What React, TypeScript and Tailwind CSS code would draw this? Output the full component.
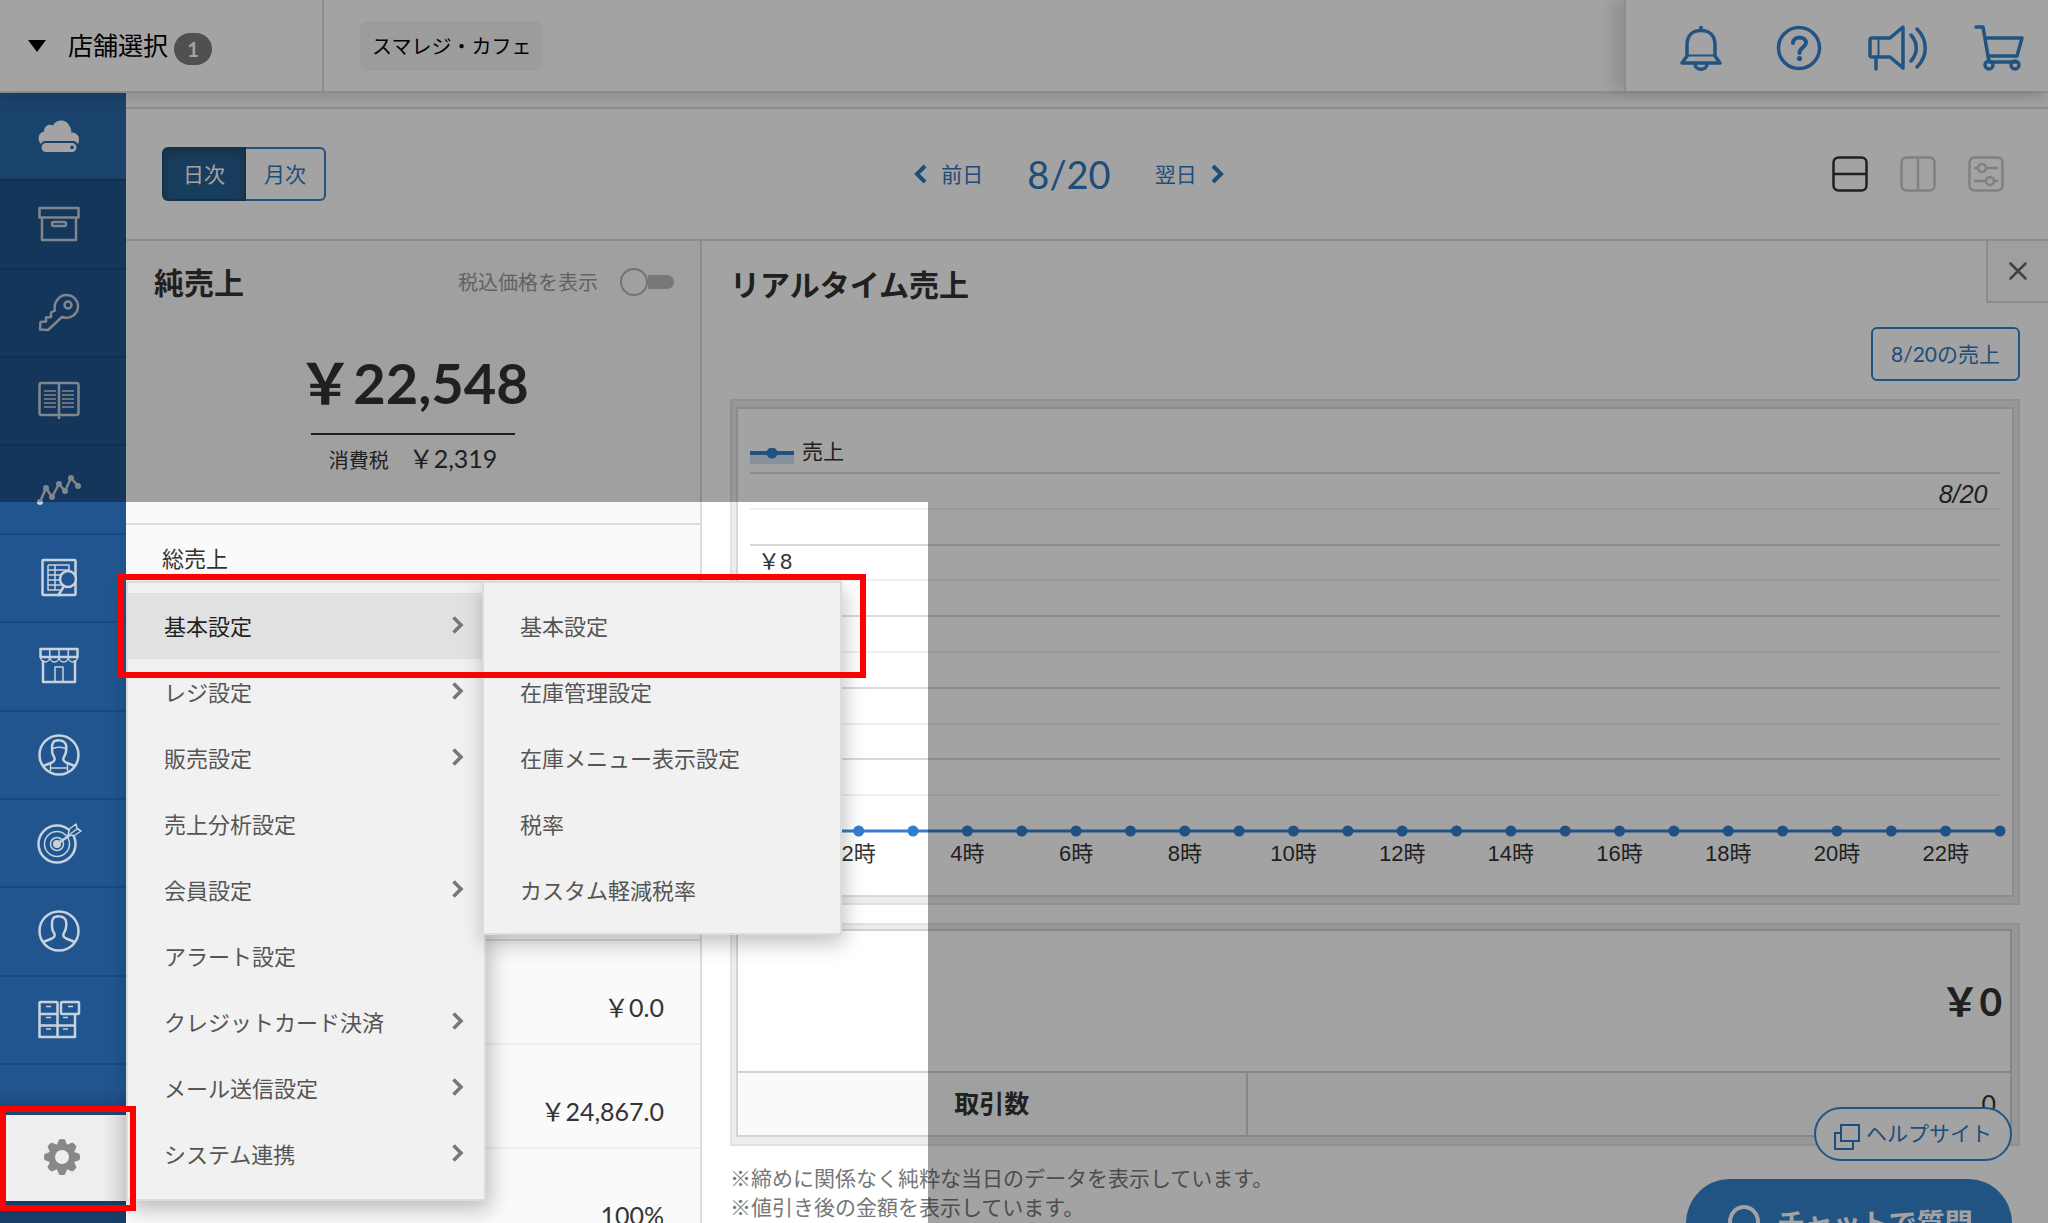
import type { ReactNode } from "react";

const navIcons: { label: string; drawing: ReactNode }[] = [
  {
    label: "ホーム",
    drawing: (
      <>
        <path
          d="M2.5 29C-1 24 .5 17.500 6 16.500C6 11 11 8.500 15 10.500C18 4 28 3.500 31.500 11C33 13.500 33.500 15 33.300 17.500C39.500 17 43 23 40 29L38.500 27.500C38 26.500 36.500 26 35 26H8C6 26 4.500 26.500 3.500 28Z"
          fill="currentColor"
          stroke="none"
        />
        <path
          d="M8 28H34a4 4 0 0 1 0 9H8a4 4 0 0 1 0-9ZM34 30.500a1.800 1.800 0 1 0 .01 0Z"
          fill="currentColor"
          fillRule="evenodd"
          stroke="none"
        />
      </>
    ),
  },
  {
    label: "商品",
    drawing: (
      <>
        <path d="M1.500 4H40.500V13.500H1.500ZM4 13.500V36H38V13.500" />
        <rect x="14" y="18" width="14" height="4" rx="1.500" />
      </>
    ),
  },
  {
    label: "権限",
    drawing: (
      <>
        <path d="M17 18.500C15 11 21 3 28.500 3C35.500 3 40 8.500 40 14.500C40 22 32 28 24 25L10 38L2 37.500L2.500 30L8 29.500V25.500L13 25V20.500Z" />
        <circle cx="30" cy="13" r="3.500" />
      </>
    ),
  },
  {
    label: "台帳",
    drawing: (
      <>
        <rect x="1.500" y="3" width="39" height="32" rx="2" />
        <path d="M21 3V39" />
        <path
          d="M6 11H18M6 15H18M6 19H18M6 23H18M6 27H18M24 11H36M24 15H36M24 19H36M24 23H36M24 27H36"
          strokeWidth="1.500"
        />
      </>
    ),
  },
  {
    label: "売上分析",
    drawing: (
      <>
        <path d="M2 33L8 19L14 28L21 15L27 22L33 9L40 17" />
        <g fill="currentColor" stroke="none">
          <circle cx="2" cy="33" r="3" />
          <circle cx="8" cy="19" r="3" />
          <circle cx="14" cy="28" r="3" />
          <circle cx="21" cy="15" r="3" />
          <circle cx="27" cy="22" r="3" />
          <circle cx="33" cy="9" r="3" />
          <circle cx="40" cy="17" r="3" />
        </g>
      </>
    ),
  },
  {
    label: "履歴",
    drawing: (
      <>
        <rect x="4.500" y="3" width="33" height="35" rx="1" />
        <path d="M10 8H31V15M10 8V33H22M17 8V33M10 13H31M10 18H24M10 23H23M10 28H24" strokeWidth="1.500" />
        <circle cx="30" cy="22" r="8" fill="#20558f" />
        <path d="M26 29L20 39" strokeWidth="2.500" />
      </>
    ),
  },
  {
    label: "店舗",
    drawing: (
      <>
        <path d="M2.500 4H39.500V12H2.500ZM5 15V37H37V15" />
        <path d="M2.500 12a4.600 5 0 0 0 9.250 0a4.600 5 0 0 0 9.250 0a4.600 5 0 0 0 9.250 0a4.600 5 0 0 0 9.250 0M11.750 4V12M21 4V12M30.250 4V12M17 37V22H25V37" strokeWidth="1.500" />
      </>
    ),
  },
  {
    label: "スタッフ",
    drawing: (
      <>
        <circle cx="21" cy="21" r="19.500" />
        <path d="M5 32L14 28.500C17 27 17.500 25 15.500 22C13.500 19 13 8 17 7C19 6 24 6 26 8C29.500 10 28.500 19 26.500 22C24.500 25 25 27 28 28.500L37 32" />
        <path d="M15 14.500Q21 12 27.500 14.500M12.500 29V37M29.500 29V37M12.500 34H29.500" strokeWidth="1.500" />
      </>
    ),
  },
  {
    label: "販促",
    drawing: (
      <>
        <circle cx="19" cy="22" r="18.500" />
        <circle cx="19" cy="22" r="12.500" strokeWidth="1.500" />
        <circle cx="19" cy="22" r="6.500" strokeWidth="1.500" />
        <circle cx="19" cy="22" r="2.800" fill="currentColor" />
        <path d="M19 22L41 7" />
        <path d="M30 13L31.500 7L38 2L39 6.500L43 9L36.500 13.500Z" fill="#20558f" strokeWidth="1.500" />
        <path d="M28 15L39 7" strokeWidth="1.500" />
      </>
    ),
  },
  {
    label: "会員",
    drawing: (
      <>
        <circle cx="21" cy="21" r="19.500" />
        <path d="M5 32L14 28.500C17 27 17.500 25 15.500 22C13.500 19 13 8 17 7C19 6 24 6 26 8C29.500 10 28.500 19 26.500 22C24.500 25 25 27 28 28.500L37 32" />
      </>
    ),
  },
  {
    label: "在庫",
    drawing: (
      <>
        <rect x="1.500" y="3" width="18" height="12" rx="1" />
        <rect x="23" y="3" width="18" height="12" rx="1" />
        <path d="M1.500 15V38H37V15M1.500 26.500H37M19.500 15V38" />
        <path d="M8 7.500H13M30 7.500H35M8 18.500H13M25 18.500H30M8 30H13M25 30H30" strokeWidth="1.500" />
      </>
    ),
  },
];

const menuItems = [
  { label: "基本設定", hasChildren: true },
  { label: "レジ設定", hasChildren: true },
  { label: "販売設定", hasChildren: true },
  { label: "売上分析設定", hasChildren: false },
  { label: "会員設定", hasChildren: true },
  { label: "アラート設定", hasChildren: false },
  { label: "クレジットカード決済", hasChildren: true },
  { label: "メール送信設定", hasChildren: true },
  { label: "システム連携", hasChildren: true },
];

const subMenuItems = ["基本設定", "在庫管理設定", "在庫メニュー表示設定", "税率", "カスタム軽減税率"];

const summaryValues = ["￥0.0", "￥24,867.0", "100%"];

const Chevron = ({ flip = false }: { flip?: boolean }) => (
  <svg viewBox="0 0 14 20" className="h-5 w-3.5" fill="none" stroke="currentColor" strokeWidth="4">
    <path d={flip ? "M12 2L4 10L12 18" : "M2 2L10 10L2 18"} />
  </svg>
);

const Header = () => (
  <header className="relative z-10 flex h-[93px] shrink-0 border-b-2 border-[#dcdcdc] bg-white shadow-[0_6px_12px_rgba(0,0,0,0.12)]">
    <button className="flex w-[324px] items-center border-r-2 border-[#dcdcdc] pl-7 text-[25px] text-black">
      <svg viewBox="0 0 18 12" className="mr-[22px] h-3 w-[18px]">
        <path d="M0 0H18L9 12Z" fill="currentColor" />
      </svg>
      店舗選択
      <span className="mt-1.5 ml-1.5 flex h-8 w-[38px] items-center justify-center rounded-full bg-[#7d7d7d] text-xl font-bold text-white">
        1
      </span>
    </button>
    <div className="flex flex-1 items-center pl-9">
      <span className="flex h-[50px] items-center rounded-lg bg-[#f5f5f5] px-3 text-xl text-black">スマレジ・カフェ</span>
    </div>
    <div className="flex items-center gap-[46px] border-l-2 border-[#dcdcdc] pt-1 pr-6 pl-[54px] text-[#3584cd] shadow-[-12px_0_14px_rgba(0,0,0,0.12)]">
      <button aria-label="お知らせ">
        <svg viewBox="0 0 42 48" className="h-12 w-[42px]" fill="none" stroke="currentColor" strokeWidth="3.500" strokeLinejoin="round">
          <path d="M21 2V7M7 32V21C7 11 13 6.500 21 6.500S35 11 35 21V32L40 39H2Z" />
          <path d="M7 31.500H35" strokeWidth="2" />
          <path d="M15 40C15 47 27 47 27 40" />
        </svg>
      </button>
      <button aria-label="ヘルプ" className="ml-2">
        <svg viewBox="0 0 46 46" className="size-[46px]" fill="none" stroke="currentColor" strokeWidth="3.500">
          <circle cx="23" cy="23" r="20.500" />
          <path d="M17 18C17 10.500 30 11 30 17.500C30 22 23.500 22.500 23.500 28" strokeWidth="4" strokeLinecap="round" />
          <circle cx="23.500" cy="33.500" r="2.600" fill="currentColor" stroke="none" />
        </svg>
      </button>
      <button aria-label="キャンペーン">
        <svg viewBox="0 0 60 46" className="h-[46px] w-[60px]" fill="none" stroke="currentColor" strokeWidth="3.500" strokeLinecap="round" strokeLinejoin="round">
          <path d="M22 13H4Q2 13 2 15V30Q2 32 4 32H22L35 43V2ZM8 32V44" />
          <path d="M10.500 13V32" strokeWidth="2" />
          <path d="M43 10C50 18 50 28 43 36M49 4C60 15 60 31 49 42" />
        </svg>
      </button>
      <button aria-label="ストア">
        <svg viewBox="0 0 50 46" className="h-[46px] w-[50px]" fill="none" stroke="currentColor" strokeWidth="3.500" strokeLinecap="round" strokeLinejoin="round">
          <path d="M2 2H9L15 37M12 13H48L43 31H14M15 37H42" />
          <circle cx="15" cy="40" r="4" />
          <circle cx="41" cy="40" r="4" />
        </svg>
      </button>
    </div>
  </header>
);

const Sidebar = () => (
  <aside className="flex w-[126px] shrink-0 flex-col bg-[#20558f]">
    <nav className="flex flex-1 flex-col">
      {navIcons.map((item, index) => (
        <a
          key={item.label}
          href="#"
          aria-label={item.label}
          className={`flex flex-1 items-center justify-center border-b-2 border-[#1b487a] pr-2 ${
            index === 0 ? "bg-[#2a69aa] text-white" : "text-[#c8d2dd]"
          }`}
        >
          <svg viewBox="0 0 42 42" className="size-[42px] overflow-visible" fill="none" stroke="currentColor" strokeWidth="2.500" strokeLinejoin="round">
            {item.drawing}
          </svg>
        </a>
      ))}
    </nav>
    <div className="bg-linear-to-b from-[#20558f] from-15% to-[#173d68] to-40% pt-[50px] pb-[22px]">
      <button aria-label="設定" className="flex h-[86px] w-full items-center justify-center bg-linear-to-r from-[#eeeeee] from-80% to-[#dcdcdc] pr-0.5 pb-0.5 text-[#888888]">
        <svg viewBox="-18 -18 36 36" className="size-9">
          <g fill="currentColor">
            {[0, 45, 90, 135, 180, 225, 270, 315].map((angle) => (
              <path key={angle} d="M-5.500 -11L-3 -17.500Q0 -18.500 3 -17.500L5.500 -11Z" transform={`rotate(${angle})`} />
            ))}
          </g>
          <circle r="10" fill="none" stroke="currentColor" strokeWidth="6" />
        </svg>
      </button>
    </div>
  </aside>
);

const Toolbar = () => (
  <div className="flex h-[132px] shrink-0 items-center justify-between border-b-2 border-[#dcdcdc] pr-11 pl-9 text-[21px] text-[#3079bd]">
    <div className="flex h-[54px]">
      <button className="w-[84px] rounded-l-md border-2 border-[#204d74] bg-[#286090] text-white shadow-[inset_0_4px_8px_rgba(0,0,0,0.2)]">
        日次
      </button>
      <button className="w-20 rounded-r-md border-2 border-l-0 border-[#3584cd]">月次</button>
    </div>
    <div className="mr-5 flex items-center">
      <button className="flex items-center gap-3.5">
        <Chevron flip />
        前日
      </button>
      <span className="mx-11 text-[38px] leading-none">8/20</span>
      <button className="flex items-center gap-3.5">
        翌日
        <Chevron />
      </button>
    </div>
    <div className="flex gap-8 text-[#c9c9c9]">
      <button aria-label="横分割" className="text-[#333333]">
        <svg viewBox="0 0 36 36" className="size-9" fill="none" stroke="currentColor" strokeWidth="2.500">
          <rect x="1.500" y="1.500" width="33" height="33" rx="5" />
          <path d="M1 18H35" />
        </svg>
      </button>
      <button aria-label="縦分割">
        <svg viewBox="0 0 36 36" className="size-9" fill="none" stroke="currentColor" strokeWidth="2.500">
          <rect x="1.500" y="1.500" width="33" height="33" rx="5" />
          <path d="M18 1V35" />
        </svg>
      </button>
      <button aria-label="表示設定">
        <svg viewBox="0 0 36 36" className="size-9" fill="none" stroke="currentColor" strokeWidth="2.500">
          <rect x="1.500" y="1.500" width="33" height="33" rx="5" />
          <path d="M6 12H10M18 12H30M6 25H18M26 25H30" />
          <circle cx="14" cy="12" r="4" />
          <circle cx="22" cy="25" r="4" />
        </svg>
      </button>
    </div>
  </div>
);

const Summary = () => (
  <section className="w-[576px] shrink-0 border-r-2 border-[#dcdcdc] bg-[#fafafa]">
    <div className="h-[284px] border-b-2 border-[#dcdcdc] pt-5">
      <div className="flex items-center justify-between pr-[26px] pl-7">
        <h2 className="text-[30px] leading-[42px] font-bold">純売上</h2>
        <label className="flex items-center text-xl text-[#999999]">
          税込価格を表示
          <input type="checkbox" role="switch" className="peer sr-only" />
          <span className="ml-[22px] flex h-7 w-[54px] items-center">
            <span className="size-7 shrink-0 rounded-full border-2 border-[#b5b5b5] bg-[#fafafa]" />
            <span className="h-3.5 flex-1 rounded-r-full bg-[#bcbcbc]" />
          </span>
        </label>
      </div>
      <div className="flex flex-col items-center">
        <p className="mt-[38px] pb-2 text-[56px] leading-[84px] font-bold">￥22,548</p>
        <div className="h-0.5 w-[204px] bg-[#333333]" />
        <p className="flex items-baseline gap-5 text-xl leading-[46px]">
          消費税<span className="text-[25px]">￥2,319</span>
        </p>
      </div>
    </div>
    <div className="h-[416px] border-b-2 border-[#dcdcdc] px-9 pt-[18px] text-[22px] leading-8">総売上</div>
    {summaryValues.map((value) => (
      <div key={value} className="flex h-[104px] items-end justify-end border-b-2 border-[#ececec] pr-9 pb-[18px] text-[25px] leading-9">
        {value}
      </div>
    ))}
  </section>
);

const SalesChart = () => {
  const gridLines = [...Array(11)].map((_, i) => i);
  const hours = [...Array(24)].map((_, i) => i);

  return (
    <div className="border-2 border-[#e2e2e2] bg-[#ededed] px-1 py-1.5">
      <div className="border-2 border-[#d9d9d9] bg-white px-3 font-['Liberation_Sans','Noto_Sans_CJK_JP',sans-serif]">
        <div className="flex h-[63px] items-end gap-2 pb-1 text-[21px] leading-8">
          <svg viewBox="0 0 44 18" className="mb-0.5 h-[18px] w-11">
            <rect y="6" width="44" height="10" fill="#d3e2f3" />
            <path d="M0 5H44" stroke="#347dcd" strokeWidth="4" />
            <circle cx="22" cy="5" r="5.500" fill="#347dcd" />
          </svg>
          売上
        </div>
        <svg className="block h-[423px] w-full overflow-visible text-[22px]" fill="#333333">
          {gridLines.map((i) => (
            <line
              key={i}
              x1="0"
              x2="100%"
              y1={1 + Math.round(i * 35.8)}
              y2={1 + Math.round(i * 35.8)}
              stroke={i % 2 === 0 ? "#d9d9d9" : "#efefef"}
              strokeWidth="2"
            />
          ))}
          <line x1="0" x2="100%" y1="359" y2="359" stroke="#347dcd" strokeWidth="3" />
          {hours.map((hour) => (
            <circle key={hour} cx={`${(hour / 23) * 100}%`} cy="359" r="5.500" fill="#347dcd" />
          ))}
          {hours
            .filter((hour) => hour > 0 && hour % 2 === 0)
            .map((hour) => (
              <text key={hour} x={`${(hour / 23) * 100}%`} y="389" textAnchor="middle">
                {hour}時
              </text>
            ))}
          <text x="8" y="97">￥8</text>
          <text x="99%" y="31" textAnchor="end" fontStyle="italic" fontSize="25">
            8/20
          </text>
        </svg>
      </div>
    </div>
  );
};

const Realtime = () => (
  <section className="relative min-w-0 flex-1 bg-white pr-7 pl-7">
    <button aria-label="閉じる" className="absolute top-0 right-0 flex size-[62px] items-center justify-center border-b-2 border-l-2 border-[#dcdcdc] bg-[#f9f9f9] text-[#666666]">
      <svg viewBox="0 0 18 18" className="size-[18px]" fill="none" stroke="currentColor" strokeWidth="2.500" strokeLinecap="round">
        <path d="M1.500 1.500L16.500 16.500M16.500 1.500L1.500 16.500" />
      </svg>
    </button>
    <h2 className="pt-5 text-[30px] leading-[46px] font-bold">リアルタイム売上</h2>
    <div className="mt-5 mb-[18px] flex justify-end">
      <button className="h-[54px] rounded-md border-2 border-[#3584cd] px-[18px] text-[21px] text-[#3079bd]">8/20の売上</button>
    </div>
    <SalesChart />
    <div className="mt-[18px] border-2 border-[#e2e2e2] bg-[#ededed] pt-1 pr-1.5 pb-[7px] pl-1">
      <table className="w-full border-2 border-[#d2d2d2]">
        <tbody>
          <tr className="border-b-2 border-[#d2d2d2] bg-white">
            <td colSpan={2} className="h-[142px] pr-2 text-right text-[39px] font-bold">￥0</td>
          </tr>
          <tr className="bg-[#fafafa]">
            <th className="h-[64px] w-2/5 border-r-2 border-[#d2d2d2] text-[25px] font-bold">取引数</th>
            <td className="pr-3.5 text-right text-[25px]">0</td>
          </tr>
        </tbody>
      </table>
    </div>
    <div className="mt-[17px] text-[21px] leading-[29px] text-[#777777]">
      <p>※締めに関係なく純粋な当日のデータを表示しています。</p>
      <p>※値引き後の金額を表示しています。</p>
    </div>
  </section>
);

const SettingsMenu = () => (
  <div className="absolute bottom-[22px] left-[126px] w-[360px] border-2 border-[#dcdcdc] bg-[#f1f1f1] pt-2.5 pb-3 text-[22px] text-[#555555] shadow-[4px_8px_20px_rgba(0,0,0,0.25)]">
    <ul>
      {menuItems.map((item, index) => (
        <li key={item.label}>
          <a
            href="#"
            className={`flex h-[66px] items-center justify-between pr-5 pl-9 ${
              index === 0 ? "bg-[#e1e1e1] text-[#222222]" : ""
            }`}
          >
            {item.label}
            {item.hasChildren && (
              <svg viewBox="0 0 12 18" className="mb-0.5 h-[18px] w-3 text-[#777777]" fill="none" stroke="currentColor" strokeWidth="3.500">
                <path d="M1.500 1.500L9 9L1.500 16.500" />
              </svg>
            )}
          </a>
        </li>
      ))}
    </ul>
    <ul className="absolute -top-0.5 left-full -ml-0.5 w-[360px] border-2 border-[#dcdcdc] bg-[#f1f1f1] py-2.5 shadow-[2px_8px_20px_rgba(0,0,0,0.25)]">
      {subMenuItems.map((label) => (
        <li key={label}>
          <a href="#" className="flex h-[66px] items-center px-9">
            {label}
          </a>
        </li>
      ))}
    </ul>
  </div>
);

const SupportLinks = () => (
  <div className="absolute right-9 -bottom-11 flex flex-col items-end gap-[18px]">
    <a href="#" className="flex h-[54px] items-center rounded-full border-2 border-[#3584cd] bg-white pr-[18px] pb-0.5 pl-[18px] text-[21px] text-[#3079bd]">
      <svg viewBox="0 0 26 26" className="mt-2 mr-1.5 size-[26px]" fill="none" stroke="currentColor" strokeWidth="2">
        <path d="M7 9H1V25H19V17" />
        <rect x="7" y="1" width="18" height="16" />
      </svg>
      ヘルプサイト
    </a>
    <button className="flex h-[88px] w-[326px] items-center rounded-full bg-[#3584cd] pl-[41px] text-[28px] font-bold text-white">
      <svg viewBox="0 0 34 38" className="mr-4 h-[38px] w-[34px]" fill="none" stroke="currentColor" strokeWidth="4">
        <path d="M17 3A14 15 0 1 0 17 33A14 15 0 1 0 17 3Z" />
      </svg>
      チャットで質問
    </button>
  </div>
);

const App = () => {
  return (
    <div className="relative flex h-screen flex-col overflow-hidden bg-white font-['Lato','Noto_Sans_CJK_JP',sans-serif] text-[#333333]">
      <Header />
      <div className="flex min-h-0 flex-1">
        <Sidebar />
        <main className="flex min-w-0 flex-1 flex-col pt-3.5">
          <div className="border-t-2 border-[#dcdcdc]">
            <Toolbar />
          </div>
          <div className="flex min-h-0 flex-1">
            <Summary />
            <Realtime />
          </div>
        </main>
      </div>
      <SupportLinks />
      <SettingsMenu />

      {/* Dimmed area around the spotlight, then the highlight frames */}
      <div className="pointer-events-none absolute top-[502px] bottom-0 left-0 z-20 w-[928px] shadow-[0_0_0_2000px_rgba(0,0,0,0.36)]" />
      <div className="pointer-events-none absolute bottom-[545px] left-[118px] z-30 h-[104px] w-[748px] border-6 border-[#ff0000]" />
      <div className="pointer-events-none absolute bottom-3 left-0 z-30 h-[105px] w-[136px] border-6 border-[#ff0000]" />
    </div>
  );
};

export default App;
